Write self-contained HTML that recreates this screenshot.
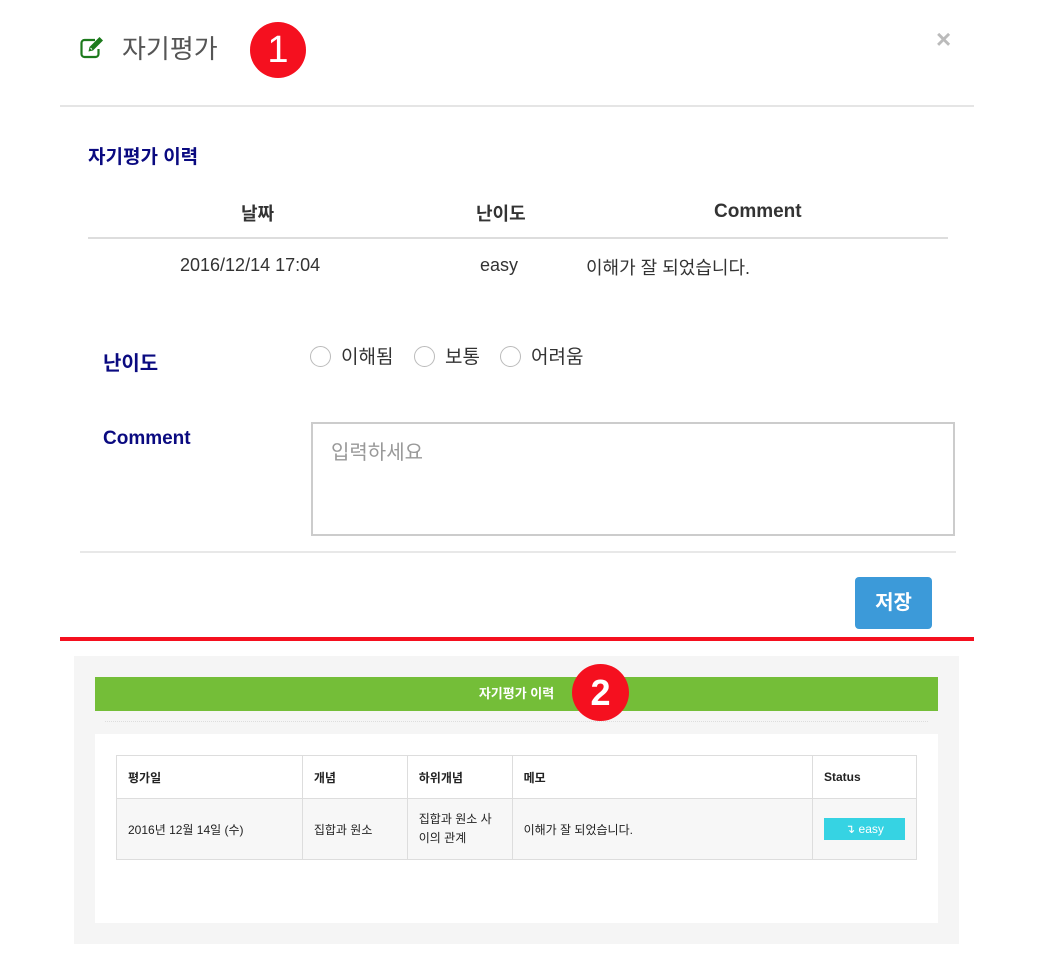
<!DOCTYPE html>
<html><head><meta charset="utf-8"><style>
body{margin:0;width:1040px;height:972px;background:#fff;position:relative;font-family:"Liberation Sans","Noto Sans CJK KR",sans-serif;overflow:hidden}
.a{position:absolute;white-space:nowrap}
.badge{position:absolute;background:#f5101f;color:#fff;border-radius:50%;text-align:center;font-weight:bold}
.rad{position:absolute;width:19px;height:19px;border:1px solid #bbb;border-radius:50%;background:#fff;top:346px}
table{border-collapse:collapse;font-size:12px;color:#222}
td{border:1px solid #ddd;padding:0 11px}
</style></head><body>
<svg class="a" style="left:80px;top:35px" width="28" height="26" viewBox="0 0 28 26"><path d="M15 5 H4.5 A3 3 0 0 0 1.5 8 V19 A3 3 0 0 0 4.5 22 H15.5 A3 3 0 0 0 18.5 19 V14" fill="none" stroke="#1c7a1c" stroke-width="2.2"/><path d="M8.5 16.5 L9.5 12 L19.5 2 L23 5.5 L13 15.5 Z" fill="#1c7a1c"/><path d="M10.5 13 L12 14.5" stroke="#fff" stroke-width="1"/></svg>
<div class="a" style="left:122px;top:29px;font-size:26px;color:#555">자기평가</div>
<div class="badge" style="left:250px;top:22px;width:56px;height:56px;line-height:56px;font-size:38px;font-weight:normal">1</div>
<div class="a" style="left:936px;top:24px;font-size:26px;color:#bbb;font-weight:bold">×</div>
<div class="a" style="left:60px;top:105px;width:914px;height:2px;background:#e5e5e5"></div>
<div class="a" style="left:88px;top:142px;font-size:19px;font-weight:bold;color:#0a0a80">자기평가 이력</div>
<div class="a" style="left:241px;top:200px;font-size:18px;font-weight:bold;color:#333">날짜</div>
<div class="a" style="left:476px;top:200px;font-size:18px;font-weight:bold;color:#333">난이도</div>
<div class="a" style="left:714px;top:201px;font-size:19px;font-weight:bold;color:#333">Comment</div>
<div class="a" style="left:88px;top:237px;width:860px;height:2px;background:#ddd"></div>
<div class="a" style="left:180px;top:255px;font-size:18px;color:#333">2016/12/14 17:04</div>
<div class="a" style="left:480px;top:255px;font-size:18px;color:#333">easy</div>
<div class="a" style="left:586px;top:254px;font-size:18px;color:#333">이해가 잘 되었습니다.</div>
<div class="a" style="left:103px;top:347px;font-size:20px;font-weight:bold;color:#0a0a80">난이도</div>
<div class="rad" style="left:310px"></div><div class="a" style="left:341px;top:342px;font-size:19px;color:#333">이해됨</div>
<div class="rad" style="left:414px"></div><div class="a" style="left:445px;top:342px;font-size:19px;color:#333">보통</div>
<div class="rad" style="left:500px"></div><div class="a" style="left:531px;top:342px;font-size:19px;color:#333">어려움</div>
<div class="a" style="left:103px;top:428px;font-size:19px;font-weight:bold;color:#0a0a80">Comment</div>
<div class="a" style="left:311px;top:422px;width:640px;height:110px;border:2px solid #ccc"></div>
<div class="a" style="left:331px;top:436px;font-size:20px;color:#999">입력하세요</div>
<div class="a" style="left:80px;top:551px;width:876px;height:2px;background:#e8e8e8"></div>
<div class="a" style="left:855px;top:577px;width:77px;height:52px;background:#3c9ad9;border-radius:4px;color:#fff;font-size:20px;font-weight:bold;text-align:center;line-height:52px">저장</div>
<div class="a" style="left:60px;top:637px;width:914px;height:4px;background:#f5101f"></div>
<div class="a" style="left:74px;top:656px;width:885px;height:288px;background:#f5f5f5"></div>
<div class="a" style="left:95px;top:677px;width:843px;height:34px;background:#74be38;color:#fff;font-size:13px;font-weight:bold;text-align:center;line-height:34px">자기평가 이력</div>
<div class="a" style="left:105px;top:721px;width:823px;border-top:1px dotted #ddd"></div>
<div class="a" style="left:95px;top:734px;width:843px;height:189px;background:#fff"></div>
<table class="a" style="left:116px;top:755px;width:801px">
<tr style="height:43px;background:#fff;font-weight:bold"><td style="width:163px">평가일</td><td style="width:82px">개념</td><td style="width:82px">하위개념</td><td style="width:278px">메모</td><td>Status</td></tr>
<tr style="height:61px;background:#f7f7f7"><td>2016년 12월 14일 (수)</td><td>집합과 원소</td><td style="white-space:normal;line-height:19px">집합과 원소 사이의 관계</td><td>이해가 잘 되었습니다.</td><td><span style="display:inline-block;width:81px;height:22px;background:#36d3e3;color:#fff;text-align:center;line-height:22px;font-size:12px">↴ easy</span></td></tr>
</table>
<div class="badge" style="left:572px;top:664px;width:57px;height:57px;line-height:57px;font-size:36px">2</div>
</body></html>
